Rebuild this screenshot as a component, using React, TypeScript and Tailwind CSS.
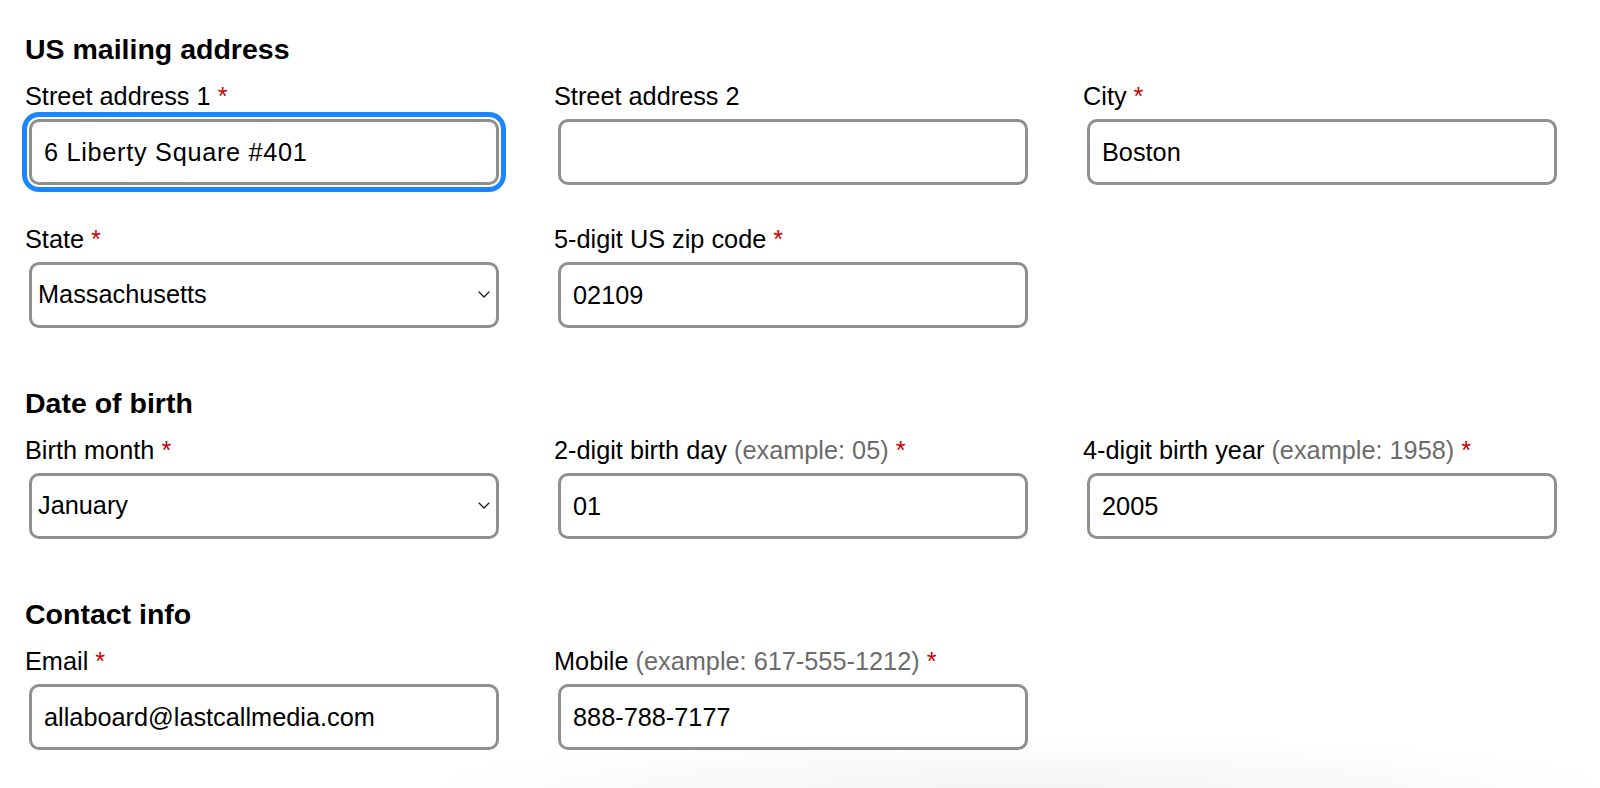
import React from "react";

const font = { fontFamily: '"Liberation Sans", Arial, Helvetica, sans-serif' };

function Req() {
  return <span className="text-[#cc0000]"> *</span>;
}

function Label({ text, hint, required }: { text: string; hint?: string; required?: boolean }) {
  return (
    <label className="block text-[25.3px] leading-[30px] text-black whitespace-nowrap">
      {text}
      {hint ? <span className="text-[#6b6b6b]"> {hint}</span> : null}
      {required ? <Req /> : null}
    </label>
  );
}

function TextField({
  label,
  hint,
  required,
  value,
  focused,
}: {
  label: string;
  hint?: string;
  required?: boolean;
  value: string;
  focused?: boolean;
}) {
  return (
    <div className="flex flex-col gap-[8px]">
      <Label text={label} hint={hint} required={required} />
      <div className="mx-[4px]">
        <input
          type="text"
          defaultValue={value}
          className={
            "block w-full h-[66px] rounded-[10px] border-[3px] border-[#8f8f8f] bg-white pl-[12px] pr-[12px] text-[25.3px] text-black outline-none " +
            (focused ? "tracking-[0.7px] shadow-[0_0_0_2px_#ffffff,0_0_0_7px_#1a86ff]" : "")
          }
        />
      </div>
    </div>
  );
}

function SelectField({
  label,
  required,
  value,
  options,
}: {
  label: string;
  required?: boolean;
  value: string;
  options: string[];
}) {
  return (
    <div className="flex flex-col gap-[8px]">
      <Label text={label} required={required} />
      <div className="mx-[4px] relative">
        <select
          defaultValue={value}
          className="block w-full h-[66px] appearance-none rounded-[10px] border-[3px] border-[#8f8f8f] bg-white pl-[6px] pr-[30px] text-[25.3px] text-black outline-none"
        >
          {options.map((o) => (
            <option key={o} value={o}>
              {o}
            </option>
          ))}
        </select>
        <svg
          className="pointer-events-none absolute right-[9px] top-[29px]"
          width="12"
          height="7"
          viewBox="0 0 12 7"
          fill="none"
        >
          <path d="M1 1l5 5 5-5" stroke="#222" strokeWidth="1.4" strokeLinecap="round" strokeLinejoin="round" />
        </svg>
      </div>
    </div>
  );
}

function Heading({ children }: { children: React.ReactNode }) {
  return <h2 className="text-[28.5px] leading-[32px] font-bold text-black mb-[16px]">{children}</h2>;
}

const grid = "grid grid-cols-[478px_478px_478px] gap-x-[51px] gap-y-[39px]";

export default function App() {
  return (
    <div className="relative min-h-[788px] w-full bg-white overflow-hidden" style={font}>
      <div className="pl-[25px] pt-[33px] flex flex-col gap-[59px]">
        <section>
          <Heading>US mailing address</Heading>
          <div className={grid}>
            <TextField label="Street address 1" required value="6 Liberty Square #401" focused />
            <TextField label="Street address 2" value="" />
            <TextField label="City" required value="Boston" />
            <SelectField
              label="State"
              required
              value="Massachusetts"
              options={["Maine", "Maryland", "Massachusetts", "Michigan", "Minnesota"]}
            />
            <TextField label="5-digit US zip code" required value="02109" />
          </div>
        </section>

        <section>
          <Heading>Date of birth</Heading>
          <div className={grid}>
            <SelectField
              label="Birth month"
              required
              value="January"
              options={["January", "February", "March", "April", "May", "June", "July", "August", "September", "October", "November", "December"]}
            />
            <TextField label="2-digit birth day" hint="(example: 05)" required value="01" />
            <TextField label="4-digit birth year" hint="(example: 1958)" required value="2005" />
          </div>
        </section>

        <section>
          <Heading>Contact info</Heading>
          <div className={grid}>
            <TextField label="Email" required value="allaboard@lastcallmedia.com" />
            <TextField label="Mobile" hint="(example: 617-555-1212)" required value="888-788-7177" />
          </div>
        </section>
      </div>

      <div className="pointer-events-none absolute left-[440px] right-0 bottom-0 h-[50px] bg-[radial-gradient(ellipse_at_bottom,rgba(0,0,0,0.045)_0%,rgba(0,0,0,0.02)_45%,rgba(0,0,0,0)_75%)]" />
    </div>
  );
}
